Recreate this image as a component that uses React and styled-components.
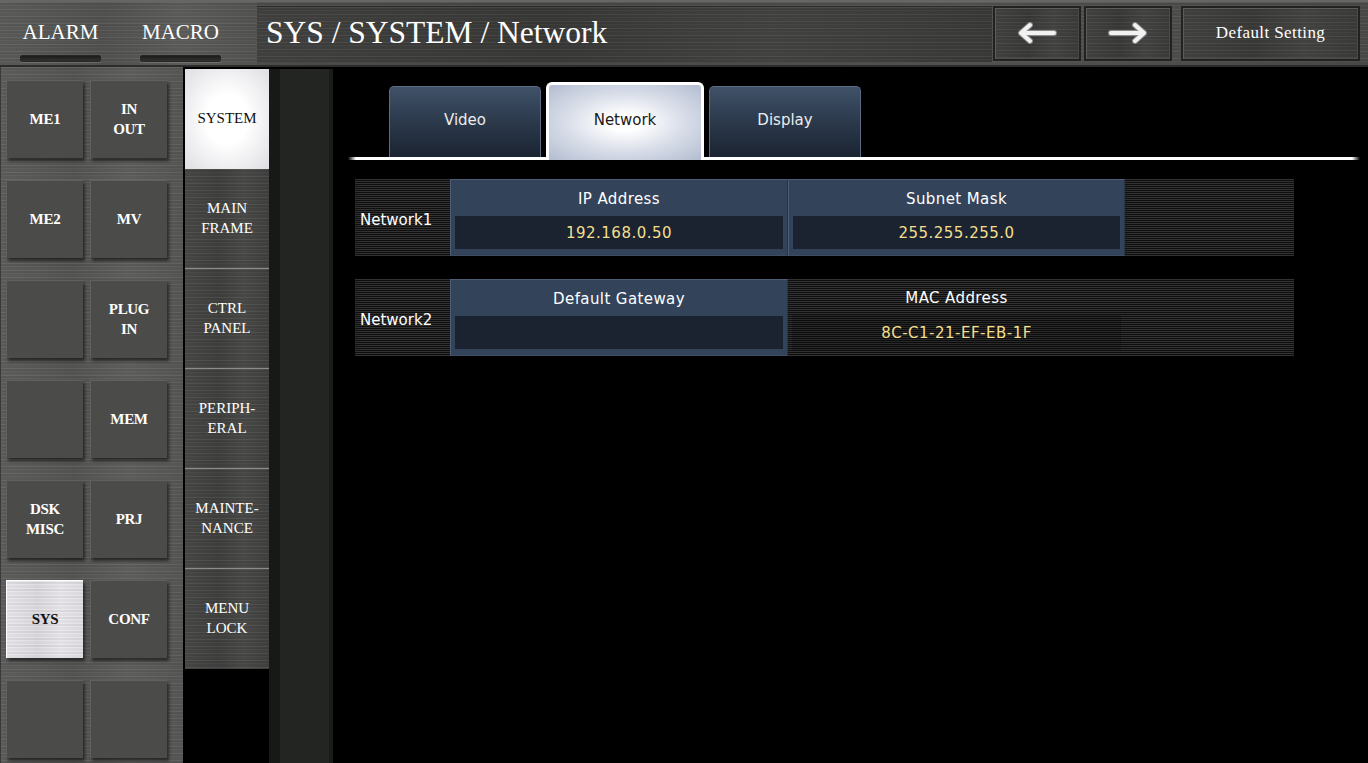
import React from "react";
import styled, { createGlobalStyle, css } from "styled-components";

const GlobalStyle = createGlobalStyle`
  html, body { margin: 0; padding: 0; background: #000; }
  body { width: 1368px; height: 763px; overflow: hidden; }
  * { box-sizing: border-box; }
`;

const serif = `"Liberation Serif", "Times New Roman", serif`;
const sans = `"DejaVu Sans", "Liberation Sans", sans-serif`;

const brushed = (base) => css`
  background-color: ${base};
  background-image:
    repeating-linear-gradient(180deg, rgba(255,255,255,0.06) 0 1px, rgba(0,0,0,0.07) 1px 3px, rgba(255,255,255,0.02) 3px 4px, rgba(0,0,0,0.04) 4px 7px),
    linear-gradient(90deg, rgba(255,255,255,0.03), rgba(0,0,0,0.05) 40%, rgba(255,255,255,0.04) 70%, rgba(0,0,0,0.03));
`;

const stripes = css`
  background-color: #111;
  background-image: repeating-linear-gradient(180deg, #323232 0 1px, #0e0e0e 1px 2px);
`;

const Screen = styled.div`
  width: 1368px;
  height: 763px;
  display: grid;
  grid-template-rows: 67px 1fr;
  background: #000;
  overflow: hidden;
`;

/* ---------- top bar ---------- */

const TopBar = styled.div`
  display: flex;
  align-items: stretch;
  ${brushed("#4d4e4c")};
  border-top: 2px solid #666765;
  border-bottom: 2px solid #2c2d2b;
  padding-right: 8px;
`;

const LeftHead = styled.div`
  width: 257px;
  display: flex;
  gap: 39px;
  padding-left: 20px;
  ${brushed("#575856")};
`;

const LampGroup = styled.div`
  width: 81px;
  display: flex;
  flex-direction: column;
  align-items: center;
  padding-top: 18px;
`;

const LampLabel = styled.span`
  font-family: ${serif};
  font-size: 21px;
  line-height: 24px;
  color: #fff;
`;

const Lamp = styled.div`
  margin-top: 11px;
  width: 81px;
  height: 7px;
  border-radius: 2px;
  background: linear-gradient(#1c1d1b, #333432);
  border: 1px solid #262725;
  box-shadow: 0 1px 0 rgba(255,255,255,0.15);
`;

const Title = styled.div`
  flex: 1;
  margin: 4px 0 3px;
  display: flex;
  align-items: center;
  padding: 0 0 3px 9px;
  ${brushed("#3c3d3b")};
  border-top: 1px solid #2b2c2a;
  font-family: ${serif};
  font-size: 31.5px;
  color: #fff;
`;

const NavGroup = styled.div`
  display: flex;
  gap: 3px;
  margin: 4px 0 4px 1px;
`;

const NavButton = styled.button`
  width: ${(p) => p.$w}px;
  margin-left: ${(p) => p.$ml || 0}px;
  display: flex;
  align-items: center;
  justify-content: center;
  ${brushed("#3d3e3c")};
  border: 2px solid #222321;
  box-shadow: inset 1px 1px 0 #5c5d5b, inset -1px -1px 0 #4a4b49;
  padding: 0 0 2px;
  font-family: ${serif};
  font-size: 17px;
  letter-spacing: 0.4px;
  color: #fff;
`;

const Arrow = ({ dir }) => (
  <svg width="40" height="22" viewBox="0 0 40 22">
    <g
      transform={dir === "right" ? "translate(40 0) scale(-1 1)" : undefined}
      fill="none"
      strokeLinecap="round"
      strokeLinejoin="round"
    >
      <path d="M37 11 H5 M13 3 L4 11 L13 19" stroke="#8a8a8a" strokeWidth="6" />
      <path d="M37 11 H5 M13 3 L4 11 L13 19" stroke="#f2f2f2" strokeWidth="4" />
    </g>
  </svg>
);

/* ---------- body ---------- */

const Body = styled.div`
  display: flex;
  min-height: 0;
`;

const KeyPanel = styled.div`
  width: 183px;
  ${brushed("#5a5b59")};
  border-left: 1px solid #3a3b39;
  display: grid;
  grid-template-columns: 77px 77px;
  grid-auto-rows: 78px;
  column-gap: 7px;
  row-gap: 22px;
  padding: 13px 0 0 5px;
`;

const Key = styled.button`
  padding: 0 0 2px;
  border: none;
  border-top: 1px solid ${(p) => (p.$active ? "#ffffff" : "#60615f")};
  border-left: 1px solid ${(p) => (p.$active ? "#ffffff" : "#60615f")};
  ${(p) => (p.$active ? brushed("#ebe8ed") : css`background: #4b4c4a;`)};
  box-shadow: 2px 3px 3px rgba(0, 0, 0, 0.55);
  font-family: ${serif};
  font-weight: bold;
  font-size: 15px;
  line-height: 20px;
  letter-spacing: -0.3px;
  color: ${(p) => (p.$active ? "#111" : "#fff")};
  white-space: pre-line;
`;

const SubMenu = styled.div`
  width: 86px;
  border-left: 2px solid #000;
  border-top: 2px solid #000;
  background: #000;
  display: flex;
  flex-direction: column;
`;

const SubItem = styled.div`
  height: 100px;
  flex: none;
  display: flex;
  align-items: center;
  justify-content: center;
  padding-bottom: 2px;
  text-align: center;
  white-space: pre-line;
  font-family: ${serif};
  font-size: 15px;
  line-height: 20px;
  ${(p) =>
    p.$active
      ? css`
          background: radial-gradient(ellipse at center, #ffffff 35%, #dedde2 100%);
          color: #111;
        `
      : css`
          ${brushed("#434442")};
          color: #fff;
        `}
  border-bottom: ${(p) => (p.$divider ? "1px solid #8c8c8c" : "none")};
`;

const Gutter = styled.div`
  width: 64px;
  border-top: 2px solid #000;
  background: linear-gradient(90deg, #161917 0 11px, #232522 11px 60px, #1a1c1a 60px 64px);
`;

const Content = styled.div`
  flex: 1;
  background: #000;
  padding: 15px 8px 0 15px;
`;

const TabStrip = styled.div`
  height: 78px;
  display: flex;
  align-items: flex-end;
  gap: 5px;
  padding-left: 41px;
  background: linear-gradient(90deg, transparent, #fff 8px, #fff calc(100% - 8px), transparent) bottom / 100% 3px no-repeat;
`;

const Tab = styled.div`
  display: flex;
  align-items: center;
  justify-content: center;
  font-family: ${sans};
  font-size: 15px;
  ${(p) =>
    p.$active
      ? css`
          width: 158px;
          height: 78px;
          padding-bottom: 6px;
          border: 3px solid #fff;
          border-bottom: none;
          border-radius: 6px 6px 0 0;
          background: radial-gradient(ellipse at center, #ffffff 15%, #d8dde8 55%, #b3bdd1 100%);
          color: #1a1a1a;
        `
      : css`
          width: 152px;
          height: 71px;
          margin-bottom: 3px;
          padding-bottom: 5px;
          border: 1px solid #5b6b82;
          border-bottom: none;
          border-radius: 5px 5px 0 0;
          background: linear-gradient(#405269, #2d3b4e 45%, #1b2432);
          color: #ececec;
        `}
`;

const Rows = styled.div`
  margin: 19px 0 0 7px;
  width: 939px;
  display: flex;
  flex-direction: column;
  gap: 23px;
`;

const Row = styled.div`
  height: 77px;
  display: grid;
  grid-template-columns: 95px 338px 337px 1fr;
  ${stripes};
`;

const RowLabel = styled.div`
  display: flex;
  align-items: center;
  padding: 5px 0 0 5px;
  font-family: ${sans};
  font-size: 15px;
  color: #fff;
`;

const Cell = styled.div`
  display: flex;
  flex-direction: column;
  padding: 0 4px 6px 4px;
  ${(p) =>
    !p.$plain &&
    css`
      background: #32435a;
      border: 1px solid #4d5e76;
      border-right-color: #26334a;
      border-bottom-color: #3d4d63;
    `}
`;

const CellTitle = styled.div`
  height: 36px;
  display: flex;
  align-items: center;
  justify-content: center;
  padding-top: 1px;
  font-family: ${sans};
  font-size: 15px;
  letter-spacing: 0.4px;
  color: #fff;
`;

const CellValue = styled.div`
  flex: 1;
  display: flex;
  align-items: center;
  justify-content: center;
  padding-top: 1px;
  background: ${(p) => (p.$plain ? "rgba(0,0,0,0.18)" : "#1b2331")};
  font-family: ${sans};
  font-size: 15px;
  letter-spacing: 0.5px;
  color: #f4df8c;
`;

const keys = [
  ["ME1", "IN\nOUT"],
  ["ME2", "MV"],
  ["", "PLUG\nIN"],
  ["", "MEM"],
  ["DSK\nMISC", "PRJ"],
  ["SYS", "CONF"],
  ["", ""],
];

const subItems = ["SYSTEM", "MAIN\nFRAME", "CTRL\nPANEL", "PERIPH-\nERAL", "MAINTE-\nNANCE", "MENU\nLOCK"];

export default function App() {
  return (
    <>
      <GlobalStyle />
      <Screen>
        <TopBar>
          <LeftHead>
            <LampGroup>
              <LampLabel>ALARM</LampLabel>
              <Lamp />
            </LampGroup>
            <LampGroup>
              <LampLabel>MACRO</LampLabel>
              <Lamp />
            </LampGroup>
          </LeftHead>
          <Title>SYS / SYSTEM / Network</Title>
          <NavGroup>
            <NavButton $w={88}>
              <Arrow dir="left" />
            </NavButton>
            <NavButton $w={88}>
              <Arrow dir="right" />
            </NavButton>
            <NavButton $w={179} $ml={6}>Default Setting</NavButton>
          </NavGroup>
        </TopBar>

        <Body>
          <KeyPanel>
            {keys.flat().map((k, i) => (
              <Key key={i} $active={k === "SYS"}>
                {k}
              </Key>
            ))}
          </KeyPanel>

          <SubMenu>
            {subItems.map((s, i) => (
              <SubItem key={s} $active={i === 0} $divider={i > 0 && i < subItems.length - 1}>
                {s}
              </SubItem>
            ))}
          </SubMenu>

          <Gutter />

          <Content>
            <TabStrip>
              <Tab>Video</Tab>
              <Tab $active>Network</Tab>
              <Tab>Display</Tab>
            </TabStrip>

            <Rows>
              <Row>
                <RowLabel>Network1</RowLabel>
                <Cell>
                  <CellTitle>IP Address</CellTitle>
                  <CellValue>192.168.0.50</CellValue>
                </Cell>
                <Cell>
                  <CellTitle>Subnet Mask</CellTitle>
                  <CellValue>255.255.255.0</CellValue>
                </Cell>
              </Row>
              <Row>
                <RowLabel>Network2</RowLabel>
                <Cell>
                  <CellTitle>Default Gateway</CellTitle>
                  <CellValue />
                </Cell>
                <Cell $plain>
                  <CellTitle>MAC Address</CellTitle>
                  <CellValue $plain>8C-C1-21-EF-EB-1F</CellValue>
                </Cell>
              </Row>
            </Rows>
          </Content>
        </Body>
      </Screen>
    </>
  );
}
